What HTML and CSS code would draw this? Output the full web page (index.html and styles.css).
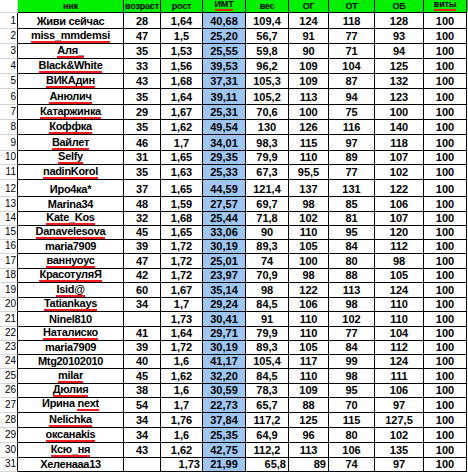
FILE: index.html
```html
<!DOCTYPE html>
<html lang="ru">
<head>
<meta charset="utf-8">
<title>Таблица</title>
<link rel="stylesheet" href="styles.css">
</head>
<body>
<div class="sheet">
  <div class="row head"><div class="n"></div><div class="c">ник</div><div class="c">возраст</div><div class="c">рост</div><div class="c"><span class="sp">ИМТ</span></div><div class="c">вес</div><div class="c">ОГ</div><div class="c">ОТ</div><div class="c">ОБ</div><div class="c"><span class="sp">виты</span></div><div class="e"></div></div>
  <div class="row"><div class="n">1</div><div class="c nm">Живи сейчас</div><div class="c">28</div><div class="c">1,64</div><div class="c b">40,68</div><div class="c">109,4</div><div class="c">124</div><div class="c">118</div><div class="c">128</div><div class="c">100</div><div class="e"></div></div>
  <div class="row"><div class="n">2</div><div class="c nm"><span class="sp">miss_mmdemsi</span></div><div class="c">47</div><div class="c">1,5</div><div class="c b">25,20</div><div class="c">56,7</div><div class="c">91</div><div class="c">77</div><div class="c">93</div><div class="c">100</div><div class="e"></div></div>
  <div class="row"><div class="n">3</div><div class="c nm"><span class="sp">Аля_</span></div><div class="c">35</div><div class="c">1,53</div><div class="c b">25,55</div><div class="c">59,8</div><div class="c">90</div><div class="c">71</div><div class="c">94</div><div class="c">100</div><div class="e"></div></div>
  <div class="row"><div class="n">4</div><div class="c nm"><span class="sp">Black&amp;White</span></div><div class="c">33</div><div class="c">1,56</div><div class="c b">39,53</div><div class="c">96,2</div><div class="c">109</div><div class="c">104</div><div class="c">125</div><div class="c">100</div><div class="e"></div></div>
  <div class="row"><div class="n">5</div><div class="c nm"><span class="sp">ВИКАдин</span></div><div class="c">43</div><div class="c">1,68</div><div class="c b">37,31</div><div class="c">105,3</div><div class="c">109</div><div class="c">87</div><div class="c">132</div><div class="c">100</div><div class="e"></div></div>
  <div class="row"><div class="n">6</div><div class="c nm"><span class="sp">Анюлич</span></div><div class="c">35</div><div class="c">1,64</div><div class="c b">39,11</div><div class="c">105,2</div><div class="c">113</div><div class="c">94</div><div class="c">123</div><div class="c">100</div><div class="e"></div></div>
  <div class="row"><div class="n">7</div><div class="c nm"><span class="sp">Катаржинка</span></div><div class="c">29</div><div class="c">1,67</div><div class="c b">25,31</div><div class="c">70,6</div><div class="c">100</div><div class="c">75</div><div class="c">100</div><div class="c">100</div><div class="e"></div></div>
  <div class="row"><div class="n">8</div><div class="c nm"><span class="sp">Коффка</span></div><div class="c">35</div><div class="c">1,62</div><div class="c b">49,54</div><div class="c">130</div><div class="c">126</div><div class="c">116</div><div class="c">140</div><div class="c">100</div><div class="e"></div></div>
  <div class="row"><div class="n">9</div><div class="c nm"><span class="sp">Вайлет</span></div><div class="c">46</div><div class="c">1,7</div><div class="c b">34,01</div><div class="c">98,3</div><div class="c">115</div><div class="c">97</div><div class="c">118</div><div class="c">100</div><div class="e"></div></div>
  <div class="row"><div class="n">10</div><div class="c nm"><span class="sp">Selfy</span></div><div class="c">31</div><div class="c">1,65</div><div class="c b">29,35</div><div class="c">79,9</div><div class="c">110</div><div class="c">89</div><div class="c">107</div><div class="c">100</div><div class="e"></div></div>
  <div class="row"><div class="n">11</div><div class="c nm"><span class="sp">nadinKorol</span></div><div class="c">35</div><div class="c">1,63</div><div class="c b">25,33</div><div class="c">67,3</div><div class="c">95,5</div><div class="c">77</div><div class="c">102</div><div class="c">100</div><div class="e"></div></div>
  <div class="row"><div class="n">12</div><div class="c nm">Иро4ка*</div><div class="c">37</div><div class="c">1,65</div><div class="c b">44,59</div><div class="c">121,4</div><div class="c">137</div><div class="c">131</div><div class="c">122</div><div class="c">100</div><div class="e"></div></div>
  <div class="row"><div class="n">13</div><div class="c nm">Marina34</div><div class="c">48</div><div class="c">1,59</div><div class="c b">27,57</div><div class="c">69,7</div><div class="c">98</div><div class="c">85</div><div class="c">106</div><div class="c">100</div><div class="e"></div></div>
  <div class="row"><div class="n">14</div><div class="c nm"><span class="sp">Kate_Kos</span></div><div class="c">32</div><div class="c">1,68</div><div class="c b">25,44</div><div class="c">71,8</div><div class="c">102</div><div class="c">81</div><div class="c">107</div><div class="c">100</div><div class="e"></div></div>
  <div class="row"><div class="n">15</div><div class="c nm"><span class="sp">Danavelesova</span></div><div class="c">45</div><div class="c">1,65</div><div class="c b">33,06</div><div class="c">90</div><div class="c">110</div><div class="c">95</div><div class="c">120</div><div class="c">100</div><div class="e"></div></div>
  <div class="row"><div class="n">16</div><div class="c nm">maria7909</div><div class="c">39</div><div class="c">1,72</div><div class="c b">30,19</div><div class="c">89,3</div><div class="c">105</div><div class="c">84</div><div class="c">112</div><div class="c">100</div><div class="e"></div></div>
  <div class="row"><div class="n">17</div><div class="c nm"><span class="sp">ваннуоус</span></div><div class="c">47</div><div class="c">1,72</div><div class="c b">25,01</div><div class="c">74</div><div class="c">100</div><div class="c">80</div><div class="c">98</div><div class="c">100</div><div class="e"></div></div>
  <div class="row"><div class="n">18</div><div class="c nm"><span class="sp">КрасотуляЯ</span></div><div class="c">42</div><div class="c">1,72</div><div class="c b">23,97</div><div class="c">70,9</div><div class="c">98</div><div class="c">88</div><div class="c">105</div><div class="c">100</div><div class="e"></div></div>
  <div class="row"><div class="n">19</div><div class="c nm"><span class="sp">Isid@</span></div><div class="c">60</div><div class="c">1,67</div><div class="c b">35,14</div><div class="c">98</div><div class="c">122</div><div class="c">113</div><div class="c">124</div><div class="c">100</div><div class="e"></div></div>
  <div class="row"><div class="n">20</div><div class="c nm"><span class="sp">Tatiankays</span></div><div class="c">34</div><div class="c">1,7</div><div class="c b">29,24</div><div class="c">84,5</div><div class="c">106</div><div class="c">98</div><div class="c">110</div><div class="c">100</div><div class="e"></div></div>
  <div class="row"><div class="n">21</div><div class="c nm">Ninel810</div><div class="c"></div><div class="c">1,73</div><div class="c b">30,41</div><div class="c">91</div><div class="c">110</div><div class="c">102</div><div class="c">110</div><div class="c">100</div><div class="e"></div></div>
  <div class="row"><div class="n">22</div><div class="c nm"><span class="sp">Наталиско</span></div><div class="c">41</div><div class="c">1,64</div><div class="c b">29,71</div><div class="c">79,9</div><div class="c">110</div><div class="c">77</div><div class="c">104</div><div class="c">100</div><div class="e"></div></div>
  <div class="row"><div class="n">23</div><div class="c nm">maria7909</div><div class="c">39</div><div class="c">1,72</div><div class="c b">30,19</div><div class="c">89,3</div><div class="c">105</div><div class="c">84</div><div class="c">112</div><div class="c">100</div><div class="e"></div></div>
  <div class="row"><div class="n">24</div><div class="c nm">Mtg20102010</div><div class="c">40</div><div class="c">1,6</div><div class="c b">41,17</div><div class="c">105,4</div><div class="c">117</div><div class="c">99</div><div class="c">124</div><div class="c">100</div><div class="e"></div></div>
  <div class="row"><div class="n">25</div><div class="c nm"><span class="sp">milar</span></div><div class="c">45</div><div class="c">1,62</div><div class="c b">32,20</div><div class="c">84,5</div><div class="c">110</div><div class="c">98</div><div class="c">111</div><div class="c">100</div><div class="e"></div></div>
  <div class="row"><div class="n">26</div><div class="c nm"><span class="sp">Дюлия</span></div><div class="c">38</div><div class="c">1,6</div><div class="c b">30,59</div><div class="c">78,3</div><div class="c">109</div><div class="c">95</div><div class="c">106</div><div class="c">100</div><div class="e"></div></div>
  <div class="row"><div class="n">27</div><div class="c nm"><span>Ирина <span class="sp">next</span></span></div><div class="c">54</div><div class="c">1,7</div><div class="c b">22,73</div><div class="c">65,7</div><div class="c">88</div><div class="c">70</div><div class="c">97</div><div class="c">100</div><div class="e"></div></div>
  <div class="row"><div class="n">28</div><div class="c nm"><span class="sp">Nelichka</span></div><div class="c">34</div><div class="c">1,76</div><div class="c b">37,84</div><div class="c">117,2</div><div class="c">125</div><div class="c">115</div><div class="c">127,5</div><div class="c">100</div><div class="e"></div></div>
  <div class="row"><div class="n">29</div><div class="c nm"><span class="sp">оксанаkis</span></div><div class="c">34</div><div class="c">1,6</div><div class="c b">25,35</div><div class="c">64,9</div><div class="c">96</div><div class="c">80</div><div class="c">102</div><div class="c">100</div><div class="e"></div></div>
  <div class="row"><div class="n">30</div><div class="c nm"><span class="sp">Ксю_ня</span></div><div class="c">43</div><div class="c">1,62</div><div class="c b">42,75</div><div class="c">112,2</div><div class="c">113</div><div class="c">106</div><div class="c">135</div><div class="c">100</div><div class="e"></div></div>
  <div class="row"><div class="n">31</div><div class="c nm">Хеленааа13</div><div class="c"></div><div class="c r">1,73</div><div class="c b">21,99</div><div class="c r">65,8</div><div class="c r">89</div><div class="c">74</div><div class="c">97</div><div class="c">100</div><div class="e"></div></div>
</div>
</body>
</html>
```

FILE: styles.css
```css
html, body {
  margin: 0;
  padding: 0;
  background: #ffffff;
}

.sheet {
  display: grid;
  width: 468px;
  height: 472px;
  overflow: hidden;
  grid-template-columns: 18px 106px 37px 42px 43px 43px 40px 46px 49px 43px 1px;
  grid-template-rows: 13px 16px 15px 15px 15px 15px 16px 15px 15px 16px 14px 15px 17px 15px 14px 14px 14px 15px 14px 15px 14px 15px 14px 14px 14px 15px 14px 15px 15px 15px 15px 14px;
  font-family: "Liberation Sans", Arial, sans-serif;
  color: #000;
}

.row {
  display: contents;
}

.c {
  box-sizing: border-box;
  border-right: 1px solid #000;
  border-bottom: 1px solid #000;
  display: flex;
  align-items: flex-end;
  justify-content: center;
  padding-bottom: 1px;
  font-size: 11px;
  font-weight: bold;
  line-height: 12px;
  white-space: nowrap;
}

.nm {
  letter-spacing: -0.3px;
}

.r {
  justify-content: flex-end;
  padding-right: 2px;
}

.b {
  background: #9fc6f2;
}

.n {
  box-sizing: border-box;
  border-right: 1px solid #000;
  border-bottom: 1px solid #d4d4d4;
  display: flex;
  align-items: flex-end;
  justify-content: flex-end;
  padding-right: 1px;
  padding-bottom: 1px;
  font-size: 10px;
  line-height: 12px;
}

.e {
  border-bottom: 1px solid #d4d4d4;
  box-sizing: border-box;
}

.head .c {
  background: #00f000;
  font-size: 9px;
  line-height: 10px;
  letter-spacing: -0.2px;
  align-items: center;
  padding-bottom: 1px;
}

.head .n {
  border-right-color: #d4d4d4;
}

.head .e {
  background: #00f000;
}

.sp {
  display: inline-block;
  line-height: 11px;
  border-bottom: 2px solid #f41c1c;
}

.nm > .sp {
  margin-bottom: -1px;
}

.head .sp {
  line-height: 9px;
}
```
